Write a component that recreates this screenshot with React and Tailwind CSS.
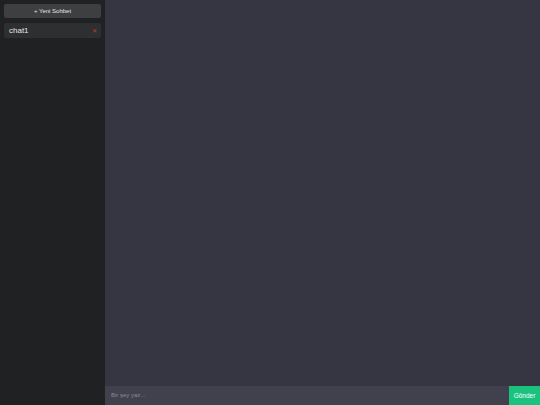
export default function App() {
  return (
    <div className="flex h-[405px] w-[540px] overflow-hidden" style={{ fontFamily: '"Liberation Sans", Arial, sans-serif' }}>
      <aside className="flex w-[105px] shrink-0 flex-col gap-[5px] bg-[#202123] p-[4px]">
        <button className="flex h-[14px] items-center justify-center rounded-[2px] bg-[#3e3f41] text-[6px] text-[#e5e5e5]">
          + Yeni Sohbet
        </button>
        <div className="flex h-[15px] items-center justify-between rounded-[2px] bg-[#2e2f31] pl-[5px] pr-[4px]">
          <span className="text-[8px] text-[#e5e5e5]">chat1</span>
          <span className="text-[6px] leading-none text-[#c0392b]">✕</span>
        </div>
      </aside>
      <main className="flex flex-1 flex-col bg-[#363643]">
        <div className="flex-1" />
        <div className="flex h-[19px]">
          <input
            className="flex-1 bg-[#41414e] px-[6px] text-[6px] text-[#ddd] outline-none placeholder:text-[#8a8a95]"
            placeholder="Bir şey yaz..."
          />
          <button className="w-[31px] bg-[#19c37d] text-[6.5px] text-white">Gönder</button>
        </div>
      </main>
    </div>
  );
}
